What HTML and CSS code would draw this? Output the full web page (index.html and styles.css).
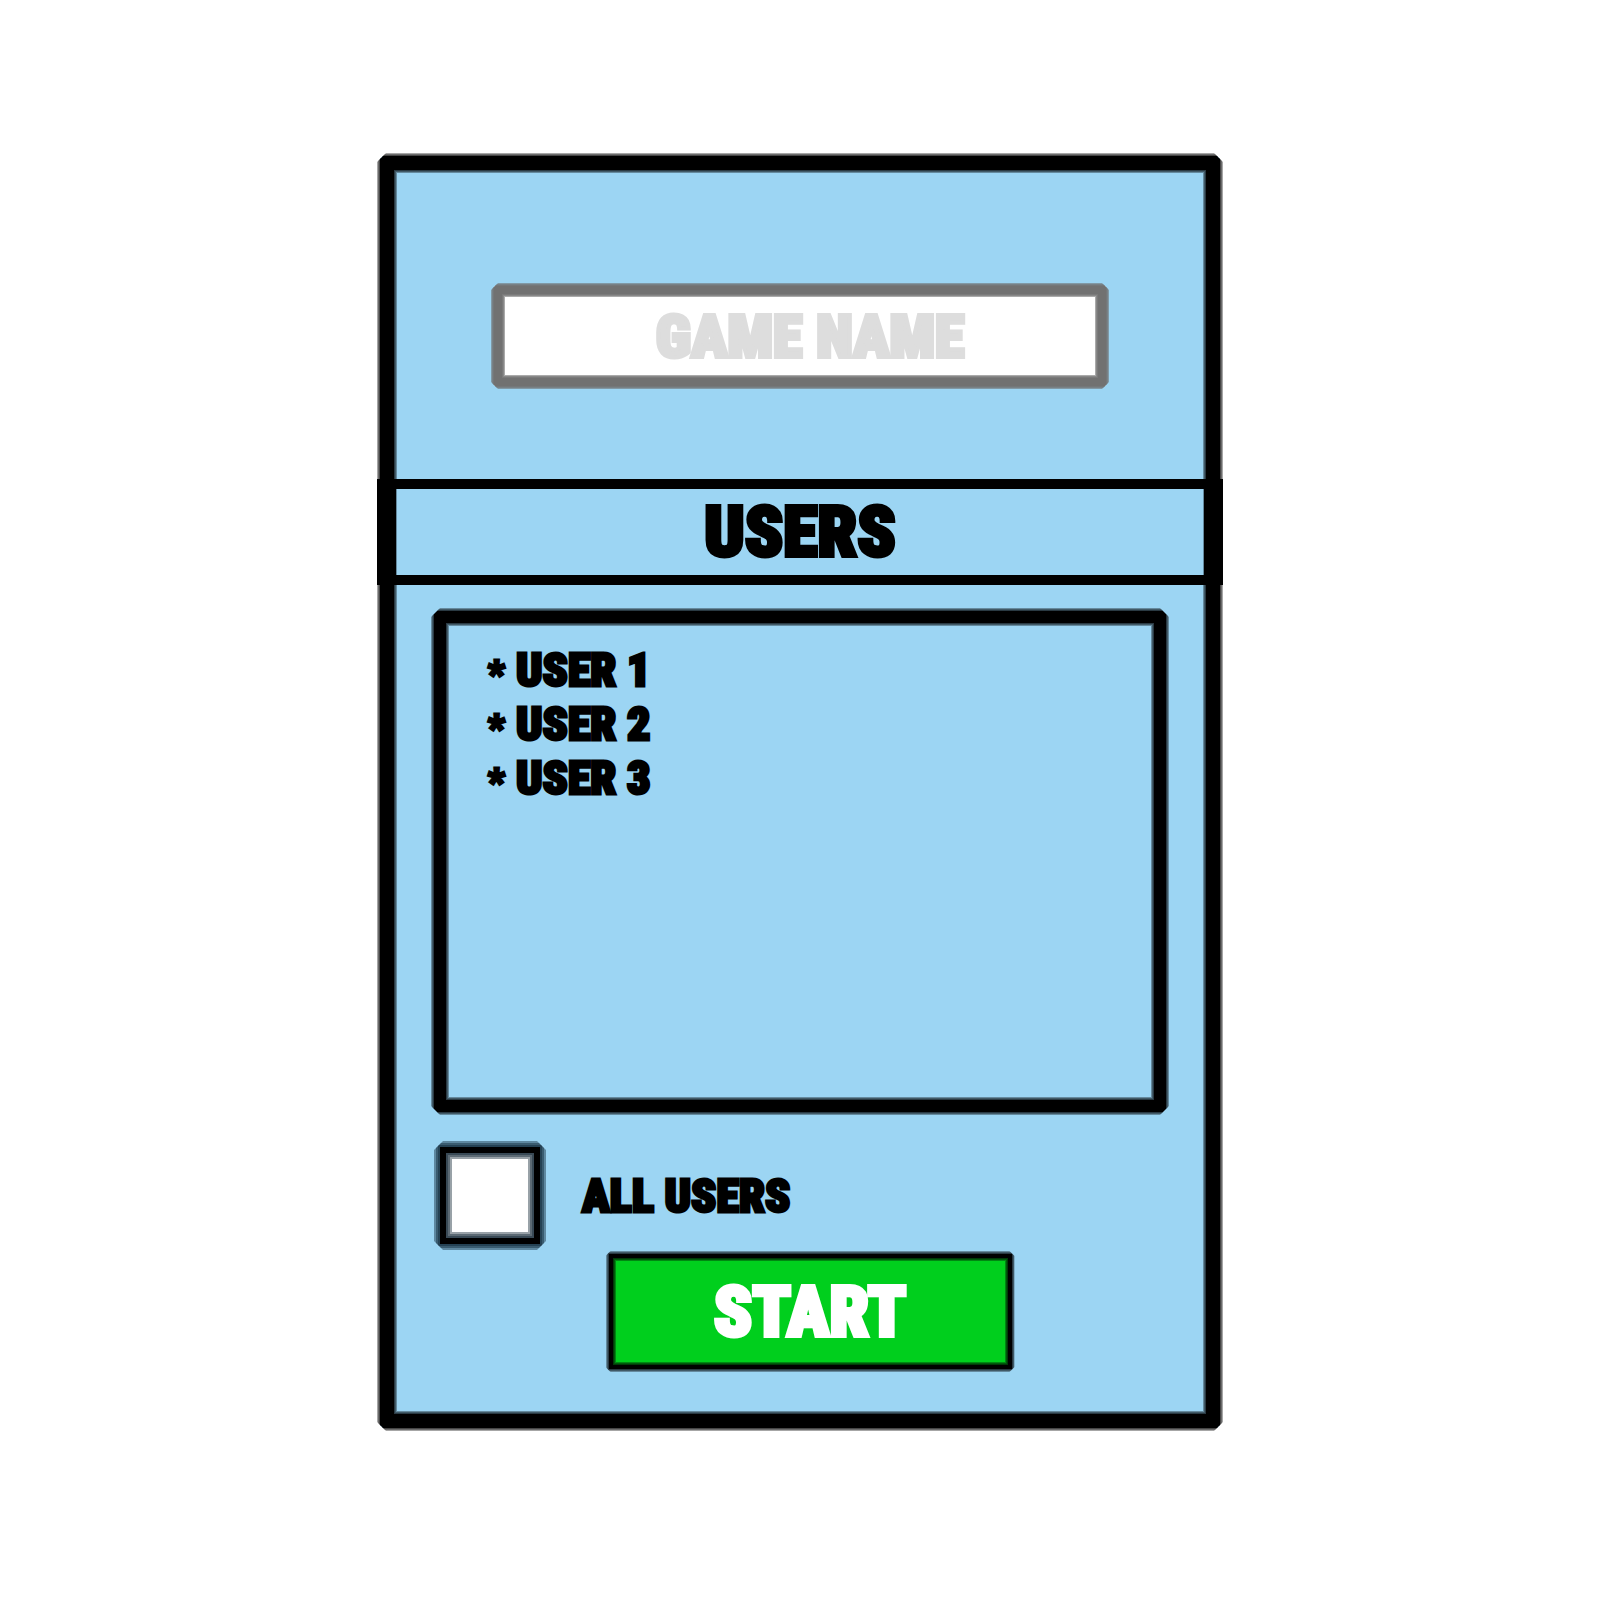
FILE: index.html
```html
<!DOCTYPE html>
<html lang="en">
<head>
  <meta charset="utf-8">
  <meta name="viewport" content="width=device-width, initial-scale=1">
  <title>New Game</title>
  <link rel="stylesheet" href="styles.css">
</head>
<body>
  <form class="panel frame">
    <div class="name-area">
      <input class="game-name frame" type="text" placeholder="GAME NAME" aria-label="Game name">
    </div>
    <h1 class="band">USERS</h1>
    <div class="content">
      <ul class="user-list frame">
        <li><span class="star">*</span>USER 1</li>
        <li><span class="star">*</span>USER 2</li>
        <li><span class="star">*</span>USER 3</li>
      </ul>
      <div class="all-users">
        <input class="tick frame" type="checkbox" id="all-users">
        <label for="all-users">ALL USERS</label>
      </div>
      <div class="actions">
        <button class="start frame" type="button">START</button>
      </div>
    </div>
  </form>
</body>
</html>
```
FILE: styles.css
```css
:root {
  --sky: #9cd5f3;
  --display: "Showcard Gothic", "Roboto Condensed", "Roboto", sans-serif;
}

* {
  box-sizing: border-box;
}

body {
  margin: 0;
  padding: 156px 24px;
  background: #fff;
  color: #000;
  font-family: var(--display);
  font-weight: 900;
}

/* Thick outline with feathered edges and cut corners */
.frame {
  --step: 1px;
  --ink: rgb(0 0 0 / 35%);
  --reach: calc(3 * var(--step));
  --out: calc(0px - var(--reach));
  --cut: 6px;
  --far: calc(100% + var(--reach));
  border: 14px solid #000;
  border-radius: 0;
  box-shadow:
    0 0 0 var(--step) var(--ink),
    0 0 0 calc(2 * var(--step)) var(--ink),
    0 0 0 var(--reach) var(--ink),
    inset 0 0 0 var(--step) var(--ink),
    inset 0 0 0 calc(2 * var(--step)) var(--ink),
    inset 0 0 0 var(--reach) var(--ink);
  clip-path: polygon(
    var(--cut) var(--out), calc(100% - var(--cut)) var(--out),
    var(--far) var(--cut), var(--far) calc(100% - var(--cut)),
    calc(100% - var(--cut)) var(--far), var(--cut) var(--far),
    var(--out) calc(100% - var(--cut)), var(--out) var(--cut)
  );
}

.panel {
  width: 100%;
  max-width: 840px;
  margin: 0 auto;
  background: var(--sky);
}

.name-area {
  padding: 116px 100px 93px;
}

.game-name {
  --ink: rgb(113 113 113 / 60%);
  --cut: 4px;
  display: block;
  width: 100%;
  height: 100px;
  padding: 0 0 0 20px;
  border: 8px solid #717171;
  background: #fff;
  color: #000;
  font: inherit;
  font-size: 60px;
  text-align: center;
  -webkit-text-stroke: 4px currentColor;
}

.game-name::placeholder {
  color: #ddd;
  opacity: 1;
}

.band {
  margin: 0 -17px;
  border: 10px solid #000;
  border-width: 10px 19px;
  font-size: 70px;
  font-weight: inherit;
  line-height: 86px;
  text-align: center;
  -webkit-text-stroke: 4px currentColor;
}

.content {
  padding: 26px 40px 45px;
  font-size: 46px;
  -webkit-text-stroke: 3px currentColor;
}

.user-list {
  min-height: 501px;
  margin: 0;
  padding: 20px 42px;
  border-width: 12px;
  list-style: none;
  line-height: 54px;
}

.star {
  display: inline-block;
  width: 28px;
  font-size: 36px;
  line-height: 1;
}

.all-users {
  display: flex;
  align-items: center;
  gap: 42px;
  padding: 35px 6px 10px;
}

.tick {
  --step: 2px;
  --ink: rgb(10 32 46 / 42%);
  --cut: 3px;
  width: 100px;
  height: 97px;
  margin: 0;
  border-width: 6px;
  background: #fff;
  appearance: none;
}

.tick:checked {
  background: #00cf1d;
}

.actions {
  display: flex;
  justify-content: center;
  padding-left: 20px;
}

.start {
  --cut: 2px;
  width: 403px;
  max-width: 100%;
  height: 115px;
  padding: 0;
  border-width: 4px;
  background: #00cf1d;
  color: #fff;
  font: inherit;
  font-size: 70px;
  -webkit-text-stroke: 4px currentColor;
}
```
